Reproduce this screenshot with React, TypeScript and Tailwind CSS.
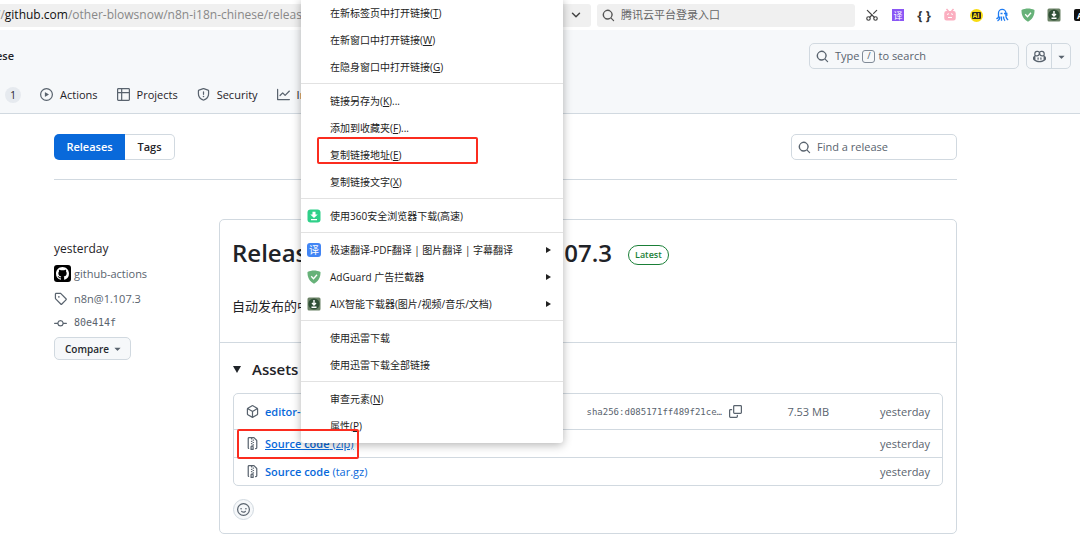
import type { ReactNode } from "react";
import { ChevronDown, Scissors } from "lucide-react";

const OCTICONS = {
  play: "M8 0a8 8 0 1 1 0 16A8 8 0 0 1 8 0ZM1.5 8a6.5 6.5 0 1 0 13 0 6.5 6.5 0 0 0-13 0Zm4.879-2.773 4.264 2.559a.25.25 0 0 1 0 .428l-4.264 2.559A.25.25 0 0 1 6 10.559V5.442a.25.25 0 0 1 .379-.215Z",
  table: "M0 1.75C0 .784.784 0 1.75 0h12.5C15.216 0 16 .784 16 1.75v12.5A1.75 1.75 0 0 1 14.25 16H1.75A1.75 1.75 0 0 1 0 14.25ZM6.5 6.5v8h7.75a.25.25 0 0 0 .25-.25V6.5Zm8-1.5V1.75a.25.25 0 0 0-.25-.25H6.5V5Zm-13 1.5v7.75c0 .138.112.25.25.25H5v-8ZM5 5V1.5H1.75a.25.25 0 0 0-.25.25V5Z",
  shield: "M7.467.133a1.748 1.748 0 0 1 1.066 0l5.25 1.68A1.75 1.75 0 0 1 15 3.48V7c0 1.566-.32 3.182-1.303 4.682-.983 1.498-2.585 2.813-5.032 3.855a1.697 1.697 0 0 1-1.33 0c-2.447-1.042-4.049-2.357-5.032-3.855C1.32 10.182 1 8.566 1 7V3.48a1.755 1.755 0 0 1 1.217-1.667Zm.61 1.429a.25.25 0 0 0-.153 0l-5.25 1.68a.25.25 0 0 0-.174.238V7c0 1.358.275 2.666 1.057 3.86.784 1.194 2.121 2.34 4.366 3.297a.196.196 0 0 0 .154 0c2.245-.956 3.582-2.104 4.366-3.298C13.225 9.666 13.5 8.36 13.5 7V3.48a.251.251 0 0 0-.174-.237l-5.25-1.68ZM8.75 4.75v3a.75.75 0 0 1-1.5 0v-3a.75.75 0 0 1 1.5 0ZM9 10.5a1 1 0 1 1-2 0 1 1 0 0 1 2 0Z",
  graph: "M1.5 1.75V13.5h13.75a.75.75 0 0 1 0 1.5H.75a.75.75 0 0 1-.75-.75V1.75a.75.75 0 0 1 1.5 0Zm14.28 2.53-5.25 5.25a.75.75 0 0 1-1.06 0L7 7.06 4.28 9.78a.751.751 0 0 1-1.042-.018.751.751 0 0 1-.018-1.042l3.25-3.25a.75.75 0 0 1 1.06 0L10 7.94l4.72-4.72a.751.751 0 0 1 1.042.018.751.751 0 0 1 .018 1.042Z",
  tag: "M1 7.775V2.75C1 1.784 1.784 1 2.75 1h5.025c.464 0 .91.184 1.238.513l6.25 6.25a1.75 1.75 0 0 1 0 2.474l-5.026 5.026a1.75 1.75 0 0 1-2.474 0l-6.25-6.25A1.752 1.752 0 0 1 1 7.775Zm1.5 0c0 .066.026.13.073.177l6.25 6.25a.25.25 0 0 0 .354 0l5.025-5.025a.25.25 0 0 0 0-.354l-6.25-6.25a.25.25 0 0 0-.177-.073H2.75a.25.25 0 0 0-.25.25ZM6 5a1 1 0 1 1 0 2 1 1 0 0 1 0-2Z",
  commit: "M11.93 8.5a4.002 4.002 0 0 1-7.86 0H.75a.75.75 0 0 1 0-1.5h3.32a4.002 4.002 0 0 1 7.86 0h3.32a.75.75 0 0 1 0 1.5Zm-1.43-.75a2.5 2.5 0 1 0-5 0 2.5 2.5 0 0 0 5 0Z",
  package: "m8.878.392 5.25 3.045c.54.314.872.89.872 1.514v6.098a1.75 1.75 0 0 1-.872 1.514l-5.25 3.045a1.75 1.75 0 0 1-1.756 0l-5.25-3.045A1.75 1.75 0 0 1 1 11.049V4.951c0-.624.332-1.201.872-1.514L7.122.392a1.75 1.75 0 0 1 1.756 0ZM7.875 1.69l-4.63 2.685L8 7.133l4.755-2.758-4.63-2.685a.248.248 0 0 0-.25 0ZM2.5 5.677v5.372c0 .09.047.171.125.216l4.625 2.683V8.432Zm6.25 8.271 4.625-2.683a.25.25 0 0 0 .125-.216V5.677L8.75 8.432Z",
  zip: "M3.5 1.75v11.5c0 .09.048.173.126.217a.75.75 0 0 1-.752 1.298A1.748 1.748 0 0 1 2 13.25V1.75C2 .784 2.784 0 3.75 0h5.586c.464 0 .909.185 1.237.513l2.914 2.914c.329.328.513.773.513 1.237v8.586A1.75 1.75 0 0 1 12.25 15h-.5a.75.75 0 0 1 0-1.5h.5a.25.25 0 0 0 .25-.25V4.664a.25.25 0 0 0-.073-.177L9.513 1.573a.25.25 0 0 0-.177-.073H7.25a.75.75 0 0 1 0 1.5h-.5a.75.75 0 0 1 0-1.5h-3a.25.25 0 0 0-.25.25Zm3.75 8.75h.5c.966 0 1.75.784 1.75 1.75v3a.75.75 0 0 1-.75.75h-2.5a.75.75 0 0 1-.75-.75v-3c0-.966.784-1.75 1.75-1.75ZM6 5.25a.75.75 0 0 1 .75-.75h.5a.75.75 0 0 1 0 1.5h-.5A.75.75 0 0 1 6 5.25Zm.75 2.25h.5a.75.75 0 0 1 0 1.5h-.5a.75.75 0 0 1 0-1.5ZM8 6.75A.75.75 0 0 1 8.75 6h.5a.75.75 0 0 1 0 1.5h-.5A.75.75 0 0 1 8 6.75ZM8.75 3h.5a.75.75 0 0 1 0 1.5h-.5a.75.75 0 0 1 0-1.5ZM8 9.75A.75.75 0 0 1 8.75 9h.5a.75.75 0 0 1 0 1.5h-.5A.75.75 0 0 1 8 9.75Zm-1 2.5v2.25h1v-2.25a.25.25 0 0 0-.25-.25h-.5a.25.25 0 0 0-.25.25Z",
  copy: "M0 6.75C0 5.784.784 5 1.75 5h1.5a.75.75 0 0 1 0 1.5h-1.5a.25.25 0 0 0-.25.25v7.5c0 .138.112.25.25.25h7.5a.25.25 0 0 0 .25-.25v-1.5a.75.75 0 0 1 1.5 0v1.5A1.75 1.75 0 0 1 9.25 16h-7.5A1.75 1.75 0 0 1 0 14.25ZM5 1.75C5 .784 5.784 0 6.75 0h7.5C15.216 0 16 .784 16 1.75v7.5A1.75 1.75 0 0 1 14.25 11h-7.5A1.75 1.75 0 0 1 5 9.25Zm1.75-.25a.25.25 0 0 0-.25.25v7.5c0 .138.112.25.25.25h7.5a.25.25 0 0 0 .25-.25v-7.5a.25.25 0 0 0-.25-.25Z",
  smiley: "M8 0a8 8 0 1 1 0 16A8 8 0 0 1 8 0ZM1.5 8a6.5 6.5 0 1 0 13 0 6.5 6.5 0 0 0-13 0Zm3.82 1.636a.75.75 0 0 1 1.038.175l.007.009c.103.118.22.222.35.31.264.178.683.37 1.285.37.602 0 1.02-.192 1.285-.371.13-.088.247-.192.35-.31l.007-.008a.75.75 0 0 1 1.222.87c-.2.25-.44.47-.71.657-.63.418-1.37.638-2.127.629-.946 0-1.652-.308-2.126-.63a3.331 3.331 0 0 1-.715-.657.75.75 0 0 1 .183-1.044ZM12 7a1 1 0 1 1-2 0 1 1 0 0 1 2 0ZM5 8a1 1 0 1 1 0-2 1 1 0 0 1 0 2Z",
  search: "M10.68 11.74a6 6 0 0 1-7.922-8.982 6 6 0 0 1 8.982 7.922l3.04 3.04a.749.749 0 0 1-.326 1.275.749.749 0 0 1-.734-.215ZM11.5 7a4.499 4.499 0 1 0-8.997 0A4.499 4.499 0 0 0 11.5 7Z",
  triangle: "m4.427 7.427 3.396 3.396a.25.25 0 0 0 .354 0l3.396-3.396A.25.25 0 0 0 11.396 7H4.604a.25.25 0 0 0-.177.427Z",
  copilot: "M7.998 15.035c-4.562 0-7.873-2.914-7.998-3.749V9.338c.085-.628.677-1.686 1.588-2.065.013-.07.024-.143.036-.218.029-.183.06-.384.126-.612-.201-.508-.254-1.084-.254-1.656 0-.87.128-1.769.693-2.484.579-.733 1.494-1.124 2.724-1.261 1.206-.134 2.262.034 2.944.765.05.053.096.108.139.165.044-.057.094-.112.143-.165.682-.731 1.738-.899 2.944-.765 1.23.137 2.145.528 2.724 1.261.566.715.693 1.614.693 2.484 0 .572-.053 1.148-.254 1.656.066.228.098.429.126.612.012.076.024.148.037.218.924.385 1.522 1.471 1.591 2.095v1.872c0 .766-3.351 3.795-8.002 3.795Zm0-1.485c2.28 0 4.584-1.11 5.002-1.433V7.862l-.023-.116c-.49.21-1.075.291-1.727.291-1.146 0-2.059-.327-2.71-.991A3.222 3.222 0 0 1 8 6.303a3.24 3.24 0 0 1-.544.743c-.65.664-1.563.991-2.71.991-.652 0-1.236-.081-1.727-.291l-.023.116v4.255c.419.323 2.722 1.433 5.002 1.433ZM6.762 2.83c-.193-.206-.637-.413-1.682-.297-1.019.113-1.479.404-1.713.7-.247.312-.369.789-.369 1.554 0 .793.129 1.171.308 1.371.162.181.519.379 1.442.379.853 0 1.339-.235 1.638-.54.315-.322.527-.827.617-1.553.117-.935-.037-1.395-.241-1.614Zm4.155-.297c-1.044-.116-1.488.091-1.681.297-.204.219-.359.679-.242 1.614.091.726.303 1.231.618 1.553.299.305.784.54 1.638.54.922 0 1.28-.198 1.442-.379.179-.2.308-.578.308-1.371 0-.765-.123-1.242-.37-1.554-.233-.296-.693-.587-1.713-.7ZM6.25 9.037a.75.75 0 0 1 .75.75v1.501a.75.75 0 0 1-1.5 0V9.787a.75.75 0 0 1 .75-.75Zm4.25.75v1.501a.75.75 0 0 1-1.5 0V9.787a.75.75 0 0 1 1.5 0Z",
  github: "M8 0c4.42 0 8 3.58 8 8a8.013 8.013 0 0 1-5.45 7.59c-.4.08-.55-.17-.55-.38 0-.27.01-1.13.01-2.2 0-.75-.25-1.23-.54-1.48 1.78-.2 3.65-.88 3.65-3.95 0-.88-.31-1.59-.82-2.15.08-.2.36-1.02-.08-2.12 0 0-.67-.22-2.2.82-.64-.18-1.32-.27-2-.27-.68 0-1.36.09-2 .27-1.53-1.03-2.2-.82-2.2-.82-.44 1.1-.16 1.92-.08 2.12-.51.56-.82 1.28-.82 2.15 0 3.06 1.86 3.75 3.64 3.95-.23.2-.44.55-.51 1.07-.46.21-1.61.55-2.33-.66-.15-.24-.6-.83-1.23-.82-.67.01-.27.38.01.53.34.19.73.9.82 1.13.16.45.68 1.31 2.69.94 0 .67.01 1.3.01 1.49 0 .21-.15.45-.55.38A7.995 7.995 0 0 1 0 8c0-4.42 3.58-8 8-8Z",
};

function Octicon({ name, className = "size-[13px]" }: { name: keyof typeof OCTICONS; className?: string }) {
  return (
    <svg viewBox="0 0 16 16" fill="currentColor" aria-hidden="true" className={`shrink-0 ${className}`}>
      <path d={OCTICONS[name]} />
    </svg>
  );
}

function AdGuardIcon() {
  return (
    <svg viewBox="0 0 14 14" className="size-[14px] shrink-0" aria-hidden="true">
      <path d="M7 .5c2.200 0 4.500.5 6.500 1.500 0 2.300.2 8-6.500 11.800C.3 10 .5 4.300.5 2 2.500 1 4.800.5 7 .5Z" fill="#67b279" />
      <path d="m4.200 6.300 2.300 2.400 3.500-4" fill="none" stroke="#fff" strokeWidth="1.300" />
    </svg>
  );
}

function AixIcon() {
  return (
    <svg viewBox="0 0 14 14" className="size-[14px] shrink-0" aria-hidden="true">
      <rect x=".5" y=".5" width="13" height="13" rx="1.500" fill="#6b8266" />
      <circle cx="7" cy="7" r="5.600" fill="#2f4f36" />
      <path d="M7 3v4.500M5 6l2 2 2-2M4.500 10.200h5" fill="none" stroke="#fff" strokeWidth="1.400" />
    </svg>
  );
}

function DownloadIcon() {
  return (
    <svg viewBox="0 0 14 14" className="size-[14px] shrink-0" aria-hidden="true">
      <rect x=".5" y=".5" width="13" height="13" rx="3" fill="#2fd089" />
      <path d="M5.500 2.800h3v2.700h2.200L7 9 3.300 5.500h2.200ZM4 10h6v1.300H4Z" fill="#fff" />
    </svg>
  );
}

function TranslateIcon() {
  return (
    <span className="flex size-[14px] shrink-0 items-center justify-center rounded-[3px] bg-[#4285f4] text-[10px] leading-none text-white">
      译
    </span>
  );
}

function TvIcon() {
  return (
    <svg viewBox="0 0 14 14" className="size-[14px]" fill="none" stroke="#fbaec0" strokeWidth="1.500" aria-hidden="true">
      <path d="m3.500 1 2 2.200M10.500 1l-2 2.200" />
      <rect x="2" y="3.700" width="10" height="8" rx="1.500" fill="#fbaec0" />
      <path d="m4 6.500 2-.8M10 6.500l-2-.8M5 9.200l1 .6 1-.6 1 .6 1-.6" stroke="#fff" strokeWidth="1" />
    </svg>
  );
}

function OctopusIcon() {
  return (
    <svg viewBox="0 0 14 14" className="size-[14px]" fill="none" stroke="#1f7cf2" strokeWidth="1.300" aria-hidden="true">
      <path d="M3.500 8.500V5a3.700 3.700 0 0 1 7.400 0v3.500M3.500 8.500c0 1.500-.8 2-2.200 2.200M4.800 8.500c.2 2-.6 3.500-2.300 4.300M6.500 8.500v4.300M8.500 8.500c0 2 .2 3 1.500 4.300M10.900 8.500c.3 1.500 1 2.500 2.200 3.500" />
      <path d="M5.500 5.500h2M9 5.500h2.800V8" />
    </svg>
  );
}

const extensions: { label: string; icon: ReactNode }[] = [
  { label: "截图", icon: <Scissors className="size-[14px] -rotate-90 text-[#444]" strokeWidth={2} /> },
  {
    label: "翻译",
    icon: <span className="flex size-3 items-center justify-center bg-[#8a56f5] text-[9px] leading-none text-white">译</span>,
  },
  { label: "JSON", icon: <span className="text-[13px] leading-none font-bold text-[#333]">{"{ }"}</span> },
  { label: "TV", icon: <TvIcon /> },
  {
    label: "AI",
    icon: (
      <span className="flex size-[13px] items-center justify-center rounded-full bg-[#f8dc13]">
        <span className="flex h-[7px] w-[9px] items-center justify-center rounded-[1px] bg-[#222] text-[7px] leading-none font-bold text-[#f8dc13]">
          AI
        </span>
      </span>
    ),
  },
  { label: "Octopus", icon: <OctopusIcon /> },
  { label: "AdGuard", icon: <AdGuardIcon /> },
  { label: "AIX", icon: <AixIcon /> },
  {
    label: "Axure",
    icon: <span className="flex size-3 items-center justify-center rounded-[2px] bg-[#111] text-[9px] leading-none font-bold text-white">A</span>,
  },
];

type MenuItem = { text: string; accessKey?: string; suffix?: string; icon?: ReactNode; submenu?: boolean };

const menuGroups: MenuItem[][] = [
  [
    { text: "在新标签页中打开链接", accessKey: "T" },
    { text: "在新窗口中打开链接", accessKey: "W" },
    { text: "在隐身窗口中打开链接", accessKey: "G" },
  ],
  [
    { text: "链接另存为", accessKey: "K", suffix: "..." },
    { text: "添加到收藏夹", accessKey: "F", suffix: "..." },
    { text: "复制链接地址", accessKey: "E" },
    { text: "复制链接文字", accessKey: "X" },
  ],
  [{ text: "使用360安全浏览器下载(高速)", icon: <DownloadIcon /> }],
  [
    { text: "极速翻译-PDF翻译 | 图片翻译 | 字幕翻译", icon: <TranslateIcon />, submenu: true },
    { text: "AdGuard 广告拦截器", icon: <AdGuardIcon />, submenu: true },
    { text: "AIX智能下载器(图片/视频/音乐/文档)", icon: <AixIcon />, submenu: true },
  ],
  [{ text: "使用迅雷下载" }, { text: "使用迅雷下载全部链接" }],
  [
    { text: "审查元素", accessKey: "N" },
    { text: "属性", accessKey: "P" },
  ],
];

function ContextMenu() {
  return (
    <div
      role="menu"
      className="absolute -top-px left-[301px] w-[262px] rounded-b-[3px] bg-white pb-1 shadow-[0_2px_10px_rgba(0,0,0,0.3)]"
    >
      {menuGroups.map((group, i) => (
        <div key={i} className={i > 0 ? "mt-[3px] border-t border-[#e2e2e2] pt-[3px]" : ""}>
          {group.map((item) => (
            <button
              key={item.text}
              role="menuitem"
              className="flex h-[27px] w-full items-center pr-3 pl-[6px] text-left text-[10px] text-[#222]"
            >
              <span className="w-[23px] shrink-0">{item.icon}</span>
              <span className="grow whitespace-nowrap">
                {item.text}
                {item.accessKey && (
                  <>
                    (<u>{item.accessKey}</u>)
                  </>
                )}
                {item.suffix}
              </span>
              {item.submenu && (
                <svg viewBox="0 0 5 6" className="h-[6px] w-[5px]" aria-hidden="true">
                  <path d="M0 0 5 3 0 6Z" fill="#222" />
                </svg>
              )}
            </button>
          ))}
        </div>
      ))}
    </div>
  );
}

function BrowserBar() {
  return (
    <div className="flex h-[30px] items-center">
      <div className="flex h-[23px] w-[591px] shrink-0 items-center justify-between rounded-r-[3px] bg-[#f0f0f0] pr-2">
        <span className="-ml-1 text-xs whitespace-nowrap text-[#888]">
          //<span className="text-[#111]">github.com</span>/other-blowsnow/n8n-i18n-chinese/releases
        </span>
        <ChevronDown className="size-[14px] text-[#444]" strokeWidth={2.5} />
      </div>
      <label className="ml-[6px] flex h-[23px] grow items-center gap-[6px] rounded-[3px] bg-[#f0f0f0] px-[5px] text-[#555]">
        <Octicon name="search" />
        <input
          aria-label="搜索"
          placeholder="腾讯云平台登录入口"
          className="w-full bg-transparent text-[11px] outline-none placeholder:text-[#666]"
        />
      </label>
      <div className="-mr-[13px] ml-1 flex shrink-0">
        {extensions.map((ext) => (
          <button key={ext.label} aria-label={ext.label} className="flex h-[23px] w-[26px] items-center justify-center whitespace-nowrap">
            {ext.icon}
          </button>
        ))}
      </div>
    </div>
  );
}

const tabs = [
  { label: "Actions", icon: "play" },
  { label: "Projects", icon: "table" },
  { label: "Security", icon: "shield" },
  { label: "Insights", icon: "graph" },
] as const;

function RepoHeader() {
  return (
    <header className="border-b border-[#d1d9e0] bg-[#f6f8fa]">
      <div className="flex h-[52px] items-center pr-[9px]">
        <a href="#" className="-ml-1 grow font-semibold">ese</a>
        <label className="flex h-[26px] w-[210px] items-center rounded-[5px] border border-[#d1d9e0] px-[6px] text-[#59636e]">
          <Octicon name="search" />
          <span className="ml-[6px] flex items-center gap-[3px] whitespace-nowrap">
            Type
            <kbd className="flex h-[13px] w-[13px] items-center justify-center rounded-[3px] border border-[#818b98] font-sans text-[9px]">/</kbd>
            to search
          </span>
          <input aria-label="Search" className="w-full min-w-0 bg-transparent outline-none" />
        </label>
        <div className="ml-[7px] flex h-[26px] rounded-[5px] border border-[#d1d9e0] text-[#59636e]">
          <button aria-label="Copilot" className="flex w-[25px] items-center justify-center border-r border-[#d1d9e0]">
            <Octicon name="copilot" />
          </button>
          <button aria-label="Open Copilot menu" className="flex w-[18px] items-center justify-center">
            <Octicon name="triangle" />
          </button>
        </div>
      </div>
      <nav className="flex h-[31px] items-center gap-[19px] pb-[6px] pl-[5px]">
        <span className="flex size-4 items-center justify-center rounded-full bg-[#e6eaef] text-[10px]">1</span>
        {tabs.map((tab) => (
          <a key={tab.label} href="#" className="flex items-center gap-[7px]">
            <Octicon name={tab.icon} className="size-[13px] text-[#59636e]" />
            {tab.label}
          </a>
        ))}
      </nav>
    </header>
  );
}

function Sidebar() {
  return (
    <aside className="flex w-[165px] shrink-0 flex-col items-start pt-[18px] text-[#59636e]">
      <p className="flex h-6 items-center text-xs text-[#1f2328]">yesterday</p>
      <a href="#" className="flex h-[25px] items-center gap-[3px]">
        <span className="flex size-[17px] items-center justify-center rounded-[3px] bg-black text-white">
          <Octicon name="github" />
        </span>
        github-actions
      </a>
      <a href="#" className="flex h-[25px] items-center gap-[7px]">
        <Octicon name="tag" />
        n8n@1.107.3
      </a>
      <a href="#" className="flex h-6 items-center gap-[7px] font-['DejaVu_Sans_Mono',monospace] text-[10px]">
        <Octicon name="commit" />
        80e414f
      </a>
      <button className="mt-[2px] flex h-[23px] w-[77px] items-center justify-between rounded-[5px] border border-[#d1d9e0] bg-[#f6f8fa] pr-[6px] pl-[10px] text-[10px] font-semibold text-[#25292e]">
        Compare
        <Octicon name="triangle" className="size-[13px] text-[#59636e]" />
      </button>
    </aside>
  );
}

const assets = [
  { name: "editor-ui.tar.gz", icon: "package", sha: "sha256:d085171ff489f21ce…", size: "7.53 MB", row: "h-[36px]" },
  { name: "Source code", ext: "(zip)", icon: "zip", row: "h-[28px]", active: true },
  { name: "Source code", ext: "(tar.gz)", icon: "zip", row: "h-[27px]" },
] as const;

function ReleaseCard() {
  return (
    <section className="min-w-0 grow rounded-[5px] border border-[#d1d9e0]">
      <div className="flex h-[122px] flex-col px-3 pt-[15px]">
        <div className="flex items-center gap-4">
          <h1 className="flex w-[380px] justify-between text-2xl leading-9 font-semibold">
            <span>Release</span>
            <span>n8n@1.107.3</span>
          </h1>
          <span className="mt-1 rounded-full border border-[#1a7f37] px-[6px] text-[9px] leading-[18px] font-semibold text-[#1a7f37]">
            Latest
          </span>
        </div>
        <p className="mt-[25px] text-[13px] leading-5">自动发布的中文语言包</p>
      </div>
      <div className="border-t border-[#d1d9e0] px-[13px] pt-4 pb-[13px]">
        <h2 className="flex items-center gap-[11px] text-[15px] leading-5 font-semibold">
          <svg viewBox="0 0 8 7" className="h-[7px] w-2" aria-hidden="true">
            <path d="M0 0h8L4 7Z" fill="#1f2328" />
          </svg>
          Assets
        </h2>
        <ul className="mt-[14px] divide-y divide-[#d1d9e0] rounded-[5px] border border-[#d1d9e0] text-[#59636e]">
          {assets.map((asset, i) => (
            <li key={i} className={`flex items-center px-3 ${asset.row}`}>
              <Octicon name={asset.icon} />
              <a href="#" className={`ml-[6px] grow text-[#0969da] ${"active" in asset ? "underline" : ""}`}>
                <span className="font-semibold">{asset.name}</span> {"ext" in asset && asset.ext}
              </a>
              {"sha" in asset && (
                <>
                  <span className="font-['DejaVu_Sans_Mono',monospace] text-[9px]">{asset.sha}</span>
                  <button aria-label="Copy digest" className="ml-[7px]">
                    <Octicon name="copy" />
                  </button>
                  <span className="w-[87px] text-right">{asset.size}</span>
                </>
              )}
              <span className="w-[101px] text-right">yesterday</span>
            </li>
          ))}
        </ul>
        <button
          aria-label="Add reaction"
          className="mt-[13px] flex size-[21px] items-center justify-center rounded-full border border-[#d1d9e0] bg-[#f6f8fa] text-[#59636e]"
        >
          <Octicon name="smiley" />
        </button>
      </div>
    </section>
  );
}

export default function App() {
  return (
    <div className="relative min-h-screen overflow-hidden bg-white font-['Open_Sans','Noto_Sans_CJK_SC',sans-serif] text-[11px] leading-4 text-[#1f2328]">
      <BrowserBar />
      <RepoHeader />
      <main className="pt-5 pr-[123px] pb-4 pl-[54px]">
        <div className="flex items-center justify-between border-b border-[#d1d9e0] pb-[19px]">
          <nav className="flex h-[26px] font-semibold">
            <a href="#" className="flex w-[71px] items-center justify-center rounded-l-[5px] bg-[#0969da] text-white">
              Releases
            </a>
            <a href="#" className="flex w-[50px] items-center justify-center rounded-r-[5px] border border-l-0 border-[#d1d9e0]">
              Tags
            </a>
          </nav>
          <label className="flex h-[26px] w-[166px] items-center gap-[6px] rounded-[5px] border border-[#d1d9e0] px-[6px] text-[#59636e]">
            <Octicon name="search" />
            <input
              aria-label="Find a release"
              placeholder="Find a release"
              className="w-full bg-transparent outline-none placeholder:text-[#59636e]"
            />
          </label>
        </div>
        <div className="mt-[39px] flex items-start">
          <Sidebar />
          <ReleaseCard />
        </div>
      </main>

      <ContextMenu />

      {/* highlighted steps */}
      <div className="pointer-events-none absolute top-[137px] left-[317px] h-[27px] w-[161px] rounded-[2px] border-2 border-[#fb2c1f]" />
      <div className="pointer-events-none absolute top-[429px] left-[237px] h-[30px] w-[122px] rounded-[2px] border-2 border-[#fb2c1f]" />
    </div>
  );
}
